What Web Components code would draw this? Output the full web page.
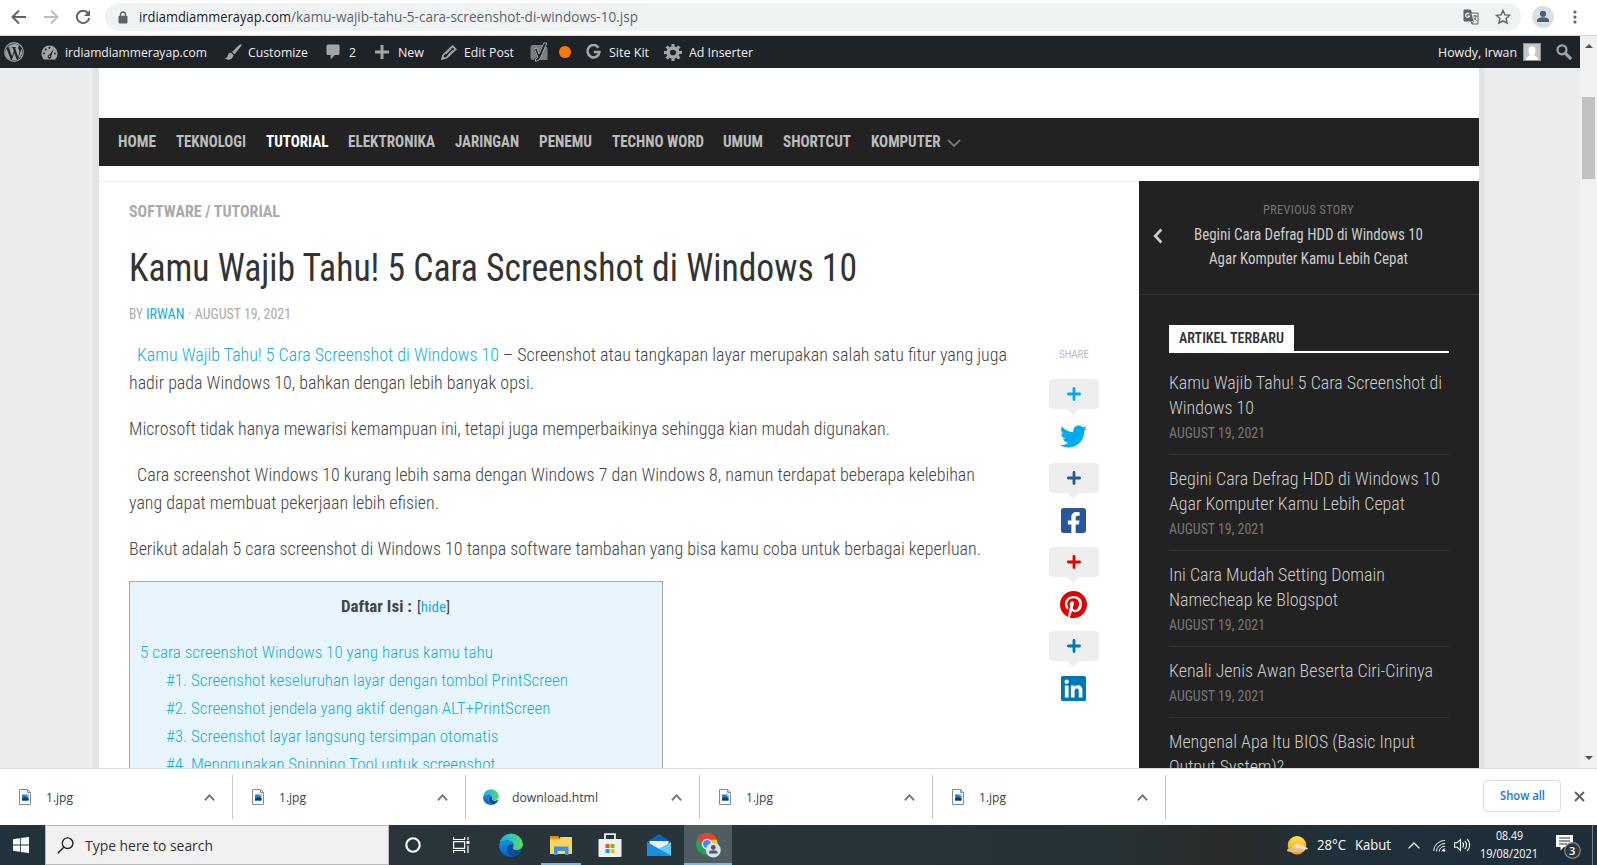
<!DOCTYPE html>
<html lang="id">
<head>
<meta charset="utf-8">
<title>Kamu Wajib Tahu! 5 Cara Screenshot di Windows 10</title>
<style>
  body {
    margin: 0;
    height: 865px;
    overflow: hidden;
    display: flex;
    flex-direction: column;
    --ui: "Open Sans", "Noto Sans", sans-serif;
    --site: "Roboto Condensed", Roboto, sans-serif;
    --link: #16aed6;
    --dark: #222;
  }
</style>
</head>
<body>
  <browser-bar></browser-bar>
  <page-view>
    <admin-bar slot="admin"></admin-bar>
    <site-nav></site-nav>
    <div style="display: flex; padding-top: 15px; background: #fff">
      <blog-post></blog-post>
      <side-bar></side-bar>
    </div>
  </page-view>
  <download-shelf>
    <download-item name="1.jpg" icon="file" w="27"></download-item>
    <download-item name="1.jpg" icon="file" w="27"></download-item>
    <download-item name="download.html" icon="edge" w="86"></download-item>
    <download-item name="1.jpg" icon="file" w="27"></download-item>
    <download-item name="1.jpg" icon="file" w="27"></download-item>
  </download-shelf>
  <task-bar></task-bar>

<script>
const ICONS = {
  back: ['0 0 16 16', '<path d="M15 8H2M8 1.5 1.5 8 8 14.5" fill="none" stroke="currentColor" stroke-width="2"/>'],
  forward: ['0 0 16 16', '<path d="M1 8h13M8 1.5 14.500 8 8 14.500" fill="none" stroke="currentColor" stroke-width="2"/>'],
  reload: ['0 0 16 16', '<path d="M13.300 4.500A6.200 6.200 0 1 0 14.200 9" fill="none" stroke="currentColor" stroke-width="2"/><path d="M15 1v6H9z" fill="currentColor"/>'],
  lock: ['0 0 10 13', '<path d="M2.500 6V3.500a2.500 2.500 0 0 1 5 0V6" fill="none" stroke="currentColor" stroke-width="1.400"/><rect x=".5" y="4.800" width="9" height="7.700" rx="1" fill="currentColor"/>'],
  translate: ['0 0 16 16', '<path d="M1 1h6.500l1 3H15v11H9l-1-3H1z" fill="none" stroke="currentColor"/><path d="M1 1h6.500l3 11H1z" fill="currentColor"/><path d="M6.200 5.200A2 2 0 1 0 6.500 7H4.700" fill="none" stroke="#fff" stroke-width="1.100"/><path d="M10 7h4M12 6v1M13.300 7c-.5 2-1.500 3-2.500 4M11 8.500l2.500 3M9 15l1.500-3" fill="none" stroke="currentColor"/>'],
  star: ['0 0 16 16', '<path d="m8 1.600 1.900 4.300 4.700.5-3.500 3.100 1 4.700L8 11.800l-4.100 2.400 1-4.700L1.400 6.400l4.700-.5z" fill="none" stroke="currentColor" stroke-width="1.400"/>'],
  person: ['0 0 22 22', '<circle cx="11" cy="11" r="11" fill="#dadfe5"/><circle cx="11" cy="7.800" r="3.100" fill="#4d5e73"/><path d="M5 16v-1.500c0-2.300 3-3.300 6-3.300s6 1 6 3.300V16z" fill="#4d5e73"/>'],
  dots: ['0 0 4 14', '<g fill="currentColor"><circle cx="2" cy="2" r="1.600"/><circle cx="2" cy="7" r="1.600"/><circle cx="2" cy="12" r="1.600"/></g>'],
  wordpress: ['0 0 20 20', '<circle cx="10" cy="10" r="9.300" fill="none" stroke="currentColor" stroke-width="1.200"/><path d="M2.500 6.500 7 18a8 8 0 0 1-4.500-11.500zM3.300 5.500A8 8 0 0 1 15.500 4c-1.500.4-1.600 1.800-.8 3 .9 1.500 1 2.500.4 4.500l-1 3.500-3.200-9.300 1.100-.2V5H7.500v.5l1.200.2 1.200 3.400-1.900 5.500L5 5.700l1-.2V5.200zM10.200 10.800l2.700 7a8 8 0 0 1-5 .2zM17.200 6.300A8 8 0 0 1 14 17l2.500-7c.5-1.500.8-2.500.7-3.700z" fill="currentColor"/>'],
  dashboard: ['0 0 18 16', '<path d="M9 .5A8.500 8.500 0 0 0 .5 9c0 2.500 1 4.800 2.500 6.500h12A9 9 0 0 0 17.500 9 8.500 8.500 0 0 0 9 .5z" fill="currentColor"/><g fill="#1d2327"><circle cx="3.200" cy="9" r="1.100"/><circle cx="5" cy="4.800" r="1.100"/><circle cx="9" cy="3" r="1.100"/><circle cx="14.800" cy="9" r="1.100"/><path d="M13.800 4 10.800 11.500a2 2 0 1 1-2-1z"/></g><circle cx="9" cy="12" r=".9" fill="currentColor"/>'],
  brush: ['0 0 18 16', '<path d="M17.500.4c-.6-.6-2 .2-3.700 1.800L8 8l2.500 2.300 5-6C17.200 2.300 18 1 17.500.4zM7.200 8.800c-1.800-.2-3 .8-3.300 2.500C3.500 13.200 2.300 14.200.5 14.800c3.500 1.600 8 1.200 9-3.600z" fill="currentColor"/>'],
  comment: ['0 0 15 16', '<path d="M2 .5h11q1.500 0 1.500 1.500v7.500q0 1.500-1.500 1.500H9.500L5 15.500V11H2Q.5 11 .5 9.500V2Q.5.5 2 .5z" fill="currentColor"/>'],
  plus: ['0 0 14 14', '<path d="M7 0v14M0 7h14" stroke="currentColor" stroke-width="3"/>'],
  pencil: ['0 0 16 16', '<path d="M11.500 1.300 14.700 4.500 5.500 13.700 1 15l1.300-4.500z" fill="none" stroke="currentColor" stroke-width="1.800"/><path d="M10.500 4 5 9.500M12 5.500 6.500 11" stroke="currentColor"/><path d="m.6 15.400 1-4 3 3z" fill="currentColor"/>'],
  yoast: ['0 0 18 20', '<path d="M3 3h9.500L8 13 5.500 7h-2L7 14q-.2 2.500-3 2.700V18H3Q.5 18 .5 15V6Q.5 3 3 3z" fill="currentColor" opacity=".7"/><path d="M14.500 3.500Q17.500 4 17.500 7v11H8c2-1 2.500-3 3.200-5z" fill="currentColor" opacity=".7"/><path d="M13.800 1h3L10.500 16q-1 3-5 3.300V17q2.500-.3 2-3L4.200 6.500H7L9 12z" fill="#1d2327" stroke="currentColor"/>'],
  google: ['0 0 16 16', '<path d="M13.300 3.700A6.300 6.300 0 1 0 14.300 8H8.300" fill="none" stroke="currentColor" stroke-width="2.600"/>'],
  gear: ['0 0 18 18', '<circle cx="9" cy="9" r="4.800" fill="none" stroke="currentColor" stroke-width="3.600"/><path d="M9 0v3M9 15v3M0 9h3M15 9h3M2.600 2.600l2.200 2.200M13.200 13.200l2.200 2.200M2.600 15.400l2.200-2.200M13.200 4.800l2.200-2.200" stroke="currentColor" stroke-width="3.200"/>'],
  avatar: ['0 0 18 18', '<rect x=".5" y=".5" width="17" height="17" fill="#c5c5c5" stroke="#8c8f94"/><path d="M3 17c0-3 2.500-3.500 3.800-4.500C5.500 10 5.500 8.500 5.500 7.500a3.500 4.200 0 0 1 7 0c0 1 0 2.500-1.300 5C12.500 13.500 15 14 15 17z" fill="#fff"/>'],
  find: ['0 0 16 16', '<circle cx="6" cy="5.800" r="4.500" fill="none" stroke="currentColor" stroke-width="2.200"/><path d="m9.200 9.200 5 5" stroke="currentColor" stroke-width="3.200" stroke-linecap="round"/>'],
  down: ['0 0 14 8', '<path d="m1 1 6 6 6-6" fill="none" stroke="currentColor" stroke-width="1.800"/>'],
  up: ['0 0 12 7', '<path d="m1 6.200 5-4.900 5 4.900" fill="none" stroke="currentColor" stroke-width="2"/>'],
  thinup: ['0 0 12 7', '<path d="m.6 6.400 5.400-5.400 5.400 5.400" fill="none" stroke="currentColor" stroke-width="1.300"/>'],
  left: ['0 0 11 16', '<path d="M9.200 1.500 2.500 8l6.700 6.500" fill="none" stroke="currentColor" stroke-width="3"/>'],
  twitter: ['0 0 512 512', '<path fill="currentColor" d="M459.400 151.700c.3 4.500.3 9.100.3 13.600 0 138.700-105.600 298.600-298.600 298.600-59.500 0-114.700-17.200-161.100-47.100 8.400 1 16.600 1.300 25.300 1.300 49.100 0 94.200-16.600 130.300-44.800-46.100-1-84.800-31.200-98.100-72.800 6.500 1 13 1.600 19.800 1.600 9.400 0 18.800-1.300 27.600-3.600-48.100-9.700-84.100-52-84.100-103v-1.300c14 7.800 30.200 12.700 47.400 13.300-28.300-18.800-46.800-51-46.800-87.400 0-19.500 5.200-37.400 14.300-53 51.700 63.700 129.300 105.300 216.400 109.800-1.600-7.800-2.600-15.900-2.600-24 0-57.800 46.800-104.900 104.900-104.900 30.200 0 57.500 12.700 76.700 33.100 23.700-4.500 46.500-13.300 66.600-25.300-7.800 24.400-24.400 44.800-46.100 57.800 21.100-2.300 41.600-8.100 60.400-16.200-14.300 20.800-32.200 39.300-52.600 54.300z"/>'],
  facebook: ['0 32 448 448', '<path fill="currentColor" d="M400 32H48A48 48 0 0 0 0 80v352a48 48 0 0 0 48 48h137.300V327.700h-63V256h63v-54.600c0-62.200 37-96.500 93.700-96.500 27.100 0 55.500 4.800 55.500 4.800v61h-31.300c-30.800 0-40.400 19.100-40.400 38.700V256h68.800l-11 71.700h-57.800V480H400a48 48 0 0 0 48-48V80a48 48 0 0 0-48-48z"/>'],
  pinterest: ['0 8 496 496', '<path fill="currentColor" d="M496 256c0 137-111 248-248 248-25.600 0-50.200-3.900-73.400-11.100 10.100-16.500 25.200-43.500 30.800-65 3-11.600 15.400-59 15.400-59 8.100 15.400 31.700 28.500 56.800 28.500 74.800 0 128.700-68.800 128.700-154.300 0-81.900-66.900-143.200-152.900-143.200-107 0-163.900 71.800-163.900 150.100 0 36.400 19.400 81.700 50.300 96.100 4.700 2.200 7.200 1.200 8.300-3.300.8-3.400 5-20.300 6.900-28.100.6-2.500.3-4.700-1.700-7.100-10.100-12.500-18.300-35.300-18.300-56.600 0-54.700 41.400-107.600 112-107.600 60.900 0 103.600 41.500 103.600 100.900 0 67.100-33.900 113.600-78 113.600-24.300 0-42.600-20.100-36.700-44.800 7-29.500 20.500-61.300 20.500-82.600 0-19-10.200-34.900-31.400-34.900-24.900 0-44.900 25.700-44.900 60.200 0 22 7.400 36.800 7.400 36.800s-24.500 103.800-29 123.200c-5 21.400-3 51.600-.9 71.200C65.400 450.900 0 361.100 0 256 0 119 111 8 248 8s248 111 248 248z"/>'],
  linkedin: ['0 32 448 448', '<path fill="currentColor" d="M416 32H31.900C14.300 32 0 46.500 0 64.300v383.400C0 465.500 14.300 480 31.900 480H416c17.600 0 32-14.500 32-32.300V64.300c0-17.800-14.400-32.300-32-32.300zM135.400 416H69V202.200h66.500V416zm-33.200-243c-21.300 0-38.500-17.300-38.500-38.500S80.900 96 102.200 96c21.200 0 38.500 17.300 38.500 38.500 0 21.300-17.200 38.500-38.500 38.500zm282.100 243h-66.400V312c0-24.800-.5-56.700-34.500-56.700-34.600 0-39.900 27-39.900 54.900V416h-66.400V202.200h63.700v29.200h.9c8.900-16.800 30.600-34.500 62.900-34.500 67.200 0 79.700 44.300 79.700 101.900V416z"/>'],
  cross: ['0 0 13 13', '<path d="M6.500 1.300v10.400M1.300 6.500h10.400" stroke="currentColor" stroke-width="2.600" stroke-linecap="round"/>'],
  close: ['0 0 11 11', '<path d="m1 1 9 9M10 1l-9 9" stroke="currentColor" stroke-width="2"/>'],
  file: ['0 0 12 16', '<path d="M.5.5h8l3 3v12H.5z" fill="#fff" stroke="#8a8a8a"/><path d="M8.500.5v3h3" fill="none" stroke="#8a8a8a"/><path d="M3 5.500h6.500v6H3z" fill="#1487d4"/><path d="m3 10 3-2 3.500 1.500v2H3z" fill="#043a6d"/><path d="M7 6h2v1.500z" fill="#8fe0ff"/>'],
  edge: ['0 0 24 24', '<defs><linearGradient id="a" x1="0" x2="1"><stop stop-color="#1aa5dc"/><stop offset=".5" stop-color="#2cc7c9"/><stop offset="1" stop-color="#5fdc4a"/></linearGradient><linearGradient id="b" x2="0" y2="1"><stop stop-color="#1793df"/><stop offset="1" stop-color="#0b5cb4"/></linearGradient></defs><path d="M.2 11A12 12 0 0 1 24 11c0 4-3 6-6.500 6-2.500 0-4-1-4-2 0-.8 1-1.200 1-3 0-2-2-4.500-6-4.500C4 7.500 1 9 .2 11z" fill="url(#a)"/><path d="M.1 12C1 8.500 5 7.400 8.500 7.500c3.500.1 6 2.300 6 4.500-3-2-6.500 1-6.300 4.500.2 3 3 6.500 7.300 6.900C7.500 25.500-.5 20 .1 12z" fill="url(#b)"/><path d="M8.200 16.500C8 13 11.500 10 14.500 12c0 1.700-1 2.200-1 3 0 1 1.500 2.500 4.500 2.500 2.400 0 4-.8 4.800-1.200.4 0 .5.200.3.600a12 12 0 0 1-7.300 6.600c-4.300-.4-7.400-4-7.600-7z" fill="#104a9c"/>'],
  windows: ['0 0 16 16', '<path d="M0 2.200 7 1.200v6.400H0zM7.800 1.100 16 0v7.600H7.800zM0 8.400h7v6.400l-7-1zM7.800 8.400H16V16l-8.200-1.100z" fill="#fff"/>'],
  search: ['0 0 17 17', '<circle cx="10.600" cy="6.200" r="5.300" fill="none" stroke="#222" stroke-width="1.400"/><path d="M6.800 10.200.8 16.200" stroke="#222" stroke-width="1.500"/>'],
  cortana: ['0 0 16 16', '<circle cx="8" cy="8" r="6.700" fill="none" stroke="#fff" stroke-width="2.100"/>'],
  taskview: ['0 0 17 16', '<path d="M.6 0v2.500h11V0M.6 16v-2.500h11V16M.6 4.700h11v6.600H.6zM15 0v3M15 8.500V16" fill="none" stroke="#fff" stroke-width="1.200"/><path d="M13.500 4h3v3h-3z" fill="#fff"/>'],
  explorer: ['0 0 22 20', '<path d="M0 1h8l1.500 3H22v15H0z" fill="#e8a51c"/><path d="M0 4.500h9L10.500 2H22v17H0z" fill="#fdd35d"/><path d="M0 1h8l1.500 2H0z" fill="#dc8e0c"/><path d="M4 11.500h14.500V20H15v-4H7.500v4H4z" fill="#3c91dc"/>'],
  store: ['0 0 24 24', '<path d="M7 6V1.200h10V6" fill="none" stroke="#e9eef0" stroke-width="1.800"/><path d="M.5 6h23v17q0 1-1 1h-21q-1 0-1-1z" fill="#f1f1f1"/><path d="M7.500 11h4v4h-4z" fill="#f25022"/><path d="M12.500 11h4v4h-4z" fill="#7fba00"/><path d="M7.500 16h4v4h-4z" fill="#00a4ef"/><path d="M12.500 16h4v4h-4z" fill="#ffb900"/>'],
  mail: ['0 0 24 22', '<path d="M0 8 12 0l12 8z" fill="#0b62b8"/><path d="M2.500 7h19v8h-19z" fill="#f2f2f2"/><path d="M0 8v13q0 1 1 1h22q1 0 1-1V8L12 15.500z" fill="#38b6f1"/><path d="m0 8 24 13.500Q24 22 23 22H1q-1 0-1-1z" fill="#1a8de0"/><path d="M24 8v13.500L11.800 14.800z" fill="#5ccdf8"/>'],
  chrome: ['0 0 25 25', '<circle cx="11" cy="11" r="11" fill="#26a559"/><path d="M1.500 5.500A11 11 0 0 1 20.600 5.700L22 8H11l-4.500 5z" fill="#e24334"/><path d="M20.600 6.700A11 11 0 0 1 11.500 22L16 13l-1-6.300z" fill="#fbc116"/><circle cx="11" cy="11" r="5.200" fill="#fff"/><circle cx="11" cy="11" r="4" fill="#4285f4"/><circle cx="17.300" cy="17" r="7.500" fill="#dadfe5"/><circle cx="17.300" cy="14.500" r="2.400" fill="#4a5a6d"/><path d="M13 20.500v-1c0-1.500 2-2.300 4.300-2.300s4.300.8 4.300 2.300v1z" fill="#4a5a6d"/>'],
  weather: ['0 0 21 19', '<defs><linearGradient id="w" x2="0" y2="1"><stop stop-color="#ffe14a"/><stop offset="1" stop-color="#f79a10"/></linearGradient></defs><circle cx="10" cy="9.300" r="9.200" fill="url(#w)"/><path d="M6 11c.5-2.500 4-4.500 6.500-2 2-.8 4 .5 4.500 2 2 0 4 .7 4 1.500s-2 1.200-4 1.200H7z" fill="#f0dfc0"/><path d="M0 14.500c0-1.500 2-2 3.500-2 1-2 4.500-2 5.500 0 3-.5 6 .5 9 1.500-1 1.500-5 2-9 2s-9 .2-9-1.500z" fill="#d8c09c"/>'],
  wifi: ['0 0 14 14', '<g fill="none" stroke="#fff" stroke-width="1"><path d="M.6 13A12.400 12.400 0 0 1 13 1.500M3.700 13.500A9.500 9.500 0 0 1 13 4.700M6.700 13.500A6.500 6.500 0 0 1 13 7.800M9.500 13.500a4 4 0 0 1 3.500-3"/></g><circle cx="12" cy="12.500" r="1.300" fill="#fff"/>'],
  sound: ['0 0 17 14', '<g fill="none" stroke="#fff" stroke-width="1.100"><path d="M.6 4.700h2.600L6.500 1.500v11L3.200 9.300H.6zM8.500 4.500a3.500 3.500 0 0 1 0 5M10.800 2.800a6 6 0 0 1 0 8.400M13.200 1a8.500 8.500 0 0 1 0 12"/></g>'],
  notes: ['0 0 25 25', '<path d="M0 1h17v12H8l-3.500 3.500V13H0z" fill="#fff"/><path d="M3 4h11M3 7h11M3 10h8" stroke="#22303a" stroke-width="1.200"/><circle cx="16.500" cy="16.500" r="7.800" fill="#2e3438" stroke="#858b8f" stroke-width="1.200"/>']
};

// Shared base: subclasses return their markup from render()
class BaseElement extends HTMLElement {
  constructor() {
    super();
    this.attachShadow({ mode: 'open' });
  }

  connectedCallback() {
    const tpl = document.createElement('template');
    tpl.innerHTML = this.render();
    this.shadowRoot.replaceChildren(tpl.content.cloneNode(true));
  }
}

class UiIcon extends BaseElement {
  render() {
    const [box, body] = ICONS[this.getAttribute('name')];
    const w = this.getAttribute('w');
    const h = this.getAttribute('h') || w;
    return `
      <style>
        :host { display: inline-flex; flex: none; }
        svg { display: block; }
      </style>
      <svg width="${w}" height="${h}" viewBox="${box}" preserveAspectRatio="none">${body}</svg>`;
  }
}

// One line of text, condensed or widened to the width in "w"
class FitText extends BaseElement {
  render() {
    return `
      <style>
        :host { display: inline-flex; flex: none; width: ${this.getAttribute('w')}px; }
        span { flex: none; white-space: pre; transform-origin: 0 50%; }
      </style>
      <span><slot></slot></span>`;
  }

  connectedCallback() {
    super.connectedCallback();
    const span = this.shadowRoot.querySelector('span');
    const natural = span.getBoundingClientRect().width;
    if (natural) span.style.transform = `scaleX(${this.getAttribute('w') / natural})`;
  }
}

class BrowserBar extends BaseElement {
  render() {
    return `
      <style>
        :host {
          display: flex; align-items: center; flex: none; height: 36px; box-sizing: border-box;
          padding: 0 20px 1px 11px; background: #fff; border-bottom: 1px solid #d5d8db;
          color: #5f6368; font: 14px/20px var(--ui);
        }
        .omni {
          flex: 1; display: flex; align-items: center; height: 28px; box-sizing: border-box;
          margin: 0 11px 0 14px; padding: 0 10px 0 13px; border-radius: 14px; background: #eff3f4;
        }
        .host { margin-left: 11px; color: #202124; }
        .grow { flex: 1; }
      </style>
      <ui-icon name="back" w="16"></ui-icon>
      <ui-icon name="forward" w="16" style="margin: 0 16px; color: #babcbe"></ui-icon>
      <ui-icon name="reload" w="16"></ui-icon>
      <div class="omni">
        <ui-icon name="lock" w="10" h="13"></ui-icon>
        <fit-text class="host" w="152">irdiamdiammerayap.com</fit-text>
        <fit-text w="347">/kamu-wajib-tahu-5-cara-screenshot-di-windows-10.jsp</fit-text>
        <span class="grow"></span>
        <ui-icon name="translate" w="16" style="margin-right: 16px"></ui-icon>
        <ui-icon name="star" w="16"></ui-icon>
      </div>
      <ui-icon name="person" w="22" style="margin-right: 19px"></ui-icon>
      <ui-icon name="dots" w="4" h="14"></ui-icon>`;
  }
}

class PageView extends BaseElement {
  render() {
    return `
      <style>
        :host { display: flex; flex: none; height: 732px; overflow: hidden; }
        .view { width: 1580px; height: 732px; overflow: hidden; background: #ececec; }
        .site { width: 1380px; height: 700px; margin-left: 93px; border: solid #e3e3e3; border-width: 0 6px; background: #fff; overflow: hidden; }
        .scroll { width: 17px; box-sizing: border-box; padding: 8px 2px; background: #f1f1f1; display: flex; flex-direction: column; align-items: center; }
        .scroll i { border: 4px solid transparent; }
        .up { border-bottom-color: #505050 !important; border-top: 0 !important; }
        .dn { border-top-color: #505050 !important; border-bottom: 0 !important; margin-top: auto; }
        b { width: 13px; height: 82px; margin-top: 49px; background: #c1c1c1; }
      </style>
      <div class="view">
        <slot name="admin"></slot>
        <div class="site"><slot></slot></div>
      </div>
      <div class="scroll"><i class="up"></i><b></b><i class="dn"></i></div>`;
  }
}

class AdminBar extends BaseElement {
  render() {
    // gap before icon, icon, width, height, gap, text, text width
    const items = [
      [17, 'dashboard', 17, 15, 7, 'irdiamdiammerayap.com', 142],
      [17, 'brush', 18, 16, 6, 'Customize', 60],
      [18, 'comment', 14, 16, 9, '2', 7],
      [19, 'plus', 14, 14, 9, 'New', 26],
      [17, 'pencil', 16, 15, 7, 'Edit Post', 50]
    ];
    const row = ([gap, icon, w, h, pad, text, tw]) =>
      `<ui-icon name="${icon}" w="${w}" h="${h}" style="margin: 0 ${pad}px 0 ${gap}px"></ui-icon><fit-text w="${tw}">${text}</fit-text>`;
    return `
      <style>
        :host {
          display: flex; align-items: center; height: 32px; box-sizing: border-box; padding: 0 8px 0 4px;
          background: #1d2327; color: #f0f0f1; font: 13px/32px var(--ui);
        }
        ui-icon { color: #a0a5aa; }
        .dot { width: 12px; height: 12px; border-radius: 50%; background: #ff7a00; margin-left: 11px; }
        .grow { flex: 1; }
      </style>
      <ui-icon name="wordpress" w="20"></ui-icon>
      ${items.map(row).join('')}
      <ui-icon name="yoast" w="18" h="20" style="margin-left: 16px"></ui-icon>
      <span class="dot"></span>
      ${row([15, 'google', 15, 16, 8, 'Site Kit', 40])}
      ${row([15, 'gear', 18, 17, 7, 'Ad Inserter', 64])}
      <span class="grow"></span>
      <fit-text w="79">Howdy, Irwan</fit-text>
      <ui-icon name="avatar" w="18" style="margin: 0 15px 0 6px"></ui-icon>
      <ui-icon name="find" w="16"></ui-icon>`;
  }
}

class SiteNav extends BaseElement {
  render() {
    const links = [
      ['HOME', 38], ['TEKNOLOGI', 70], ['TUTORIAL', 62.5], ['ELEKTRONIKA', 87], ['JARINGAN', 64],
      ['PENEMU', 53], ['TECHNO WORD', 92], ['UMUM', 40], ['SHORTCUT', 68], ['KOMPUTER', 69.5]
    ];
    return `
      <style>
        :host {
          display: flex; align-items: center; gap: 19.850px; height: 48px; margin-top: 50px; padding-left: 19px;
          background: var(--dark); color: #bcbcbc; font: 700 16px/48px var(--site);
        }
        .on { color: #fff; }
        ui-icon { margin: 2px 0 0 -13px; color: #777; }
      </style>
      ${links.map(([t, w]) => `<fit-text w="${w}" class="${t === 'TUTORIAL' ? 'on' : ''}">${t}</fit-text>`).join('')}
      <ui-icon name="down" w="14" h="8"></ui-icon>`;
  }
}

class ShareItem extends BaseElement {
  render() {
    const h = this.getAttribute('h');
    const w = this.getAttribute('w');
    return `
      <style>
        :host { display: flex; flex-direction: column; align-items: center; width: 50px; height: 84px; color: ${this.getAttribute('color')}; }
        .count { width: 50px; height: 30px; border-radius: 4px; background: #eee; display: flex; align-items: center; justify-content: center; }
        .tip { border: 6px solid transparent; border-top-color: #eee; border-bottom: 0; margin-right: 2px; }
        .count ui-icon { margin: 0 1px 1px 0; }
        .logo { height: 42px; display: flex; align-items: center; padding-right: 1px; }
      </style>
      <div class="count"><ui-icon name="cross" w="14"></ui-icon></div>
      <div class="tip"></div>
      <div class="logo"><ui-icon name="${this.getAttribute('icon')}" w="${w}" h="${h}"></ui-icon></div>`;
  }
}

class BlogPost extends BaseElement {
  render() {
    const toc = [
      ['#1. Screenshot keseluruhan layar dengan tombol PrintScreen', 402],
      ['#2. Screenshot jendela yang aktif dengan ALT+PrintScreen', 384.5],
      ['#3. Screenshot layar langsung tersimpan otomatis', 332.5],
      ['#4. Menggunakan Snipping Tool untuk screenshot', 329.5]
    ];
    return `
      <style>
        :host {
          display: block; width: 1040px; height: 690px; box-sizing: border-box; padding: 18px 0 0 30px;
          border-top: 1px solid #eee; background: #fff; color: #444; font: 300 18px/28px var(--site);
        }
        .cat { font: 700 17px/22px var(--site); color: #aaa; height: 22px; }
        h1 { margin: 22px 0 0; font: 400 38px/48px var(--site); color: #333; height: 48px; }
        .meta { display: flex; margin-top: 12px; font: 400 14px/20px var(--site); color: #aaa; }
        .link { color: var(--link); }
        .cols { display: flex; margin-top: 17px; }
        .text { width: 920px; }
        p { margin: 0 0 18px; }
        p > span { display: flex; height: 28px; }
        .in { padding-left: 8px; }
        .toc { width: 534px; height: 250px; box-sizing: border-box; border: 1px solid #aaa; background: #e8f5ff; padding: 10px; font-size: 17px; }
        .toc div { height: 28px; }
        .toc .head { display: flex; justify-content: center; align-items: baseline; margin-bottom: 18px; }
        .head strong { margin-right: 5px; color: #444; font-weight: 700; }
        .sub { padding-left: 26px; }
        .hide { font-size: 15px; font-weight: 400; margin-right: 2px; }
        .share { display: flex; flex-direction: column; align-items: center; }
        .label { font: 300 11px/14px var(--site); color: #999; margin: 7px 0 17px; }
      </style>
      <div class="cat"><fit-text w="151">SOFTWARE / TUTORIAL</fit-text></div>
      <h1><fit-text w="728">Kamu Wajib Tahu! 5 Cara Screenshot di Windows 10</fit-text></h1>
      <div class="meta">
        <fit-text w="17">BY </fit-text><fit-text w="38.500" class="link">IRWAN</fit-text><fit-text w="106"> · AUGUST 19, 2021</fit-text>
      </div>
      <div class="cols">
        <div class="text">
          <p>
            <span class="in"><fit-text class="link" w="362">Kamu Wajib Tahu! 5 Cara Screenshot di Windows 10</fit-text><fit-text w="508"> – Screenshot atau tangkapan layar merupakan salah satu fitur yang juga</fit-text></span>
            <span><fit-text w="405">hadir pada Windows 10, bahkan dengan lebih banyak opsi.</fit-text></span>
          </p>
          <p><span><fit-text w="761">Microsoft tidak hanya mewarisi kemampuan ini, tetapi juga memperbaikinya sehingga kian mudah digunakan.</fit-text></span></p>
          <p>
            <span class="in"><fit-text w="838">Cara screenshot Windows 10 kurang lebih sama dengan Windows 7 dan Windows 8, namun terdapat beberapa kelebihan</fit-text></span>
            <span><fit-text w="310">yang dapat membuat pekerjaan lebih efisien.</fit-text></span>
          </p>
          <p><span><fit-text w="852">Berikut adalah 5 cara screenshot di Windows 10 tanpa software tambahan yang bisa kamu coba untuk berbagai keperluan.</fit-text></span></p>
          <div class="toc">
            <div class="head"><strong><fit-text w="71">Daftar Isi :</fit-text></strong><fit-text class="hide" w="33">[<span class="link">hide</span>]</fit-text></div>
            <div class="link"><fit-text w="353">5 cara screenshot Windows 10 yang harus kamu tahu</fit-text></div>
            ${toc.map(([t, w]) => `<div class="link sub"><fit-text w="${w}">${t}</fit-text></div>`).join('')}
          </div>
        </div>
        <div class="share">
          <fit-text class="label" w="30">SHARE</fit-text>
          <share-item icon="twitter" color="#00abf0" w="27" h="27"></share-item>
          <share-item icon="facebook" color="#2a5697" w="25" h="25"></share-item>
          <share-item icon="pinterest" color="#e10000" w="27" h="27"></share-item>
          <share-item icon="linkedin" color="#0077b5" w="25" h="25"></share-item>
        </div>
      </div>`;
  }
}

class SideBar extends BaseElement {
  render() {
    const posts = [
      [['Kamu Wajib Tahu! 5 Cara Screenshot di', 273], ['Windows 10', 85]],
      [['Begini Cara Defrag HDD di Windows 10', 271], ['Agar Komputer Kamu Lebih Cepat', 236]],
      [['Ini Cara Mudah Setting Domain', 216], ['Namecheap ke Blogspot', 169]],
      [['Kenali Jenis Awan Beserta Ciri-Cirinya', 264]],
      [['Mengenal Apa Itu BIOS (Basic Input', 246], ['Output System)?', 115]]
    ];
    const item = lines => `
      <li>
        ${lines.map(([t, w]) => `<div><fit-text w="${w}">${t}</fit-text></div>`).join('')}
        <time><fit-text w="96">AUGUST 19, 2021</fit-text></time>
      </li>`;
    return `
      <style>
        :host { display: block; width: 340px; height: 690px; background: var(--dark); color: #ccc; font: 300 18px/25px var(--site); }
        .prev { display: flex; align-items: center; height: 114px; box-sizing: border-box; padding: 0 0 6px 14px; border-bottom: 1px solid #333; }
        .prev ui-icon { margin-top: 2px; }
        .prev div { width: 290px; display: flex; flex-direction: column; align-items: center; font: 400 16px/24px var(--site); }
        .prev small { font-size: 13px; line-height: 21px; height: 24px; color: #777; letter-spacing: .5px; }
        h3 { margin: 30px 30px 17px; height: 28px; box-sizing: border-box; border-bottom: 2px solid #fff; display: flex; font: 600 15px/27px var(--site); color: #333; }
        h3 span { display: flex; height: 28px; padding: 0 10px; background: #fff; }
        ul { margin: 0 30px; padding: 0; list-style: none; }
        li { border-bottom: 1px solid #333; padding: 11px 0 11px; }
        li:first-child { padding-top: 0; }
        li div { height: 25px; }
        time { display: block; height: 20px; margin-top: 3px; font: 400 14px/20px var(--site); color: #777; }
      </style>
      <div class="prev">
        <ui-icon name="left" w="10" h="16"></ui-icon>
        <div>
          <small><fit-text w="91">PREVIOUS STORY</fit-text></small>
          <fit-text w="229">Begini Cara Defrag HDD di Windows 10</fit-text>
          <fit-text w="199">Agar Komputer Kamu Lebih Cepat</fit-text>
        </div>
      </div>
      <h3><span><fit-text w="105">ARTIKEL TERBARU</fit-text></span></h3>
      <ul>${posts.map(item).join('')}</ul>`;
  }
}

class DownloadItem extends BaseElement {
  render() {
    const icon = this.getAttribute('icon');
    const size = icon === 'file' ? 'w="12" h="16" style="margin: 0 2px"' : 'w="16"';
    return `
      <style>
        :host { display: flex; align-items: center; width: 233.200px; height: 44px; box-sizing: border-box; padding: 0 17px; border-right: 1px solid #c4c6c9; }
        fit-text { margin-left: 13px; }
        .arrow { margin-left: auto; color: #75787c; }
      </style>
      <ui-icon name="${icon}" ${size}></ui-icon>
      <fit-text w="${this.getAttribute('w')}">${this.getAttribute('name')}</fit-text>
      <ui-icon class="arrow" name="up" w="11" h="7"></ui-icon>`;
  }
}

class DownloadShelf extends BaseElement {
  render() {
    return `
      <style>
        :host {
          display: flex; align-items: center; flex: none; height: 57px; box-sizing: border-box; padding-right: 12px;
          border-top: 1px solid #d7dade; background: #fff; color: #3c4043; font: 13px/20px var(--ui);
        }
        button {
          width: 78px; height: 32px; margin: 0 13px 2px auto; padding: 0; border: 1px solid #dadce0; border-radius: 4px;
          background: #fff; color: #1a73e8; font: 600 12px/28px var(--ui);
        }
      </style>
      <slot></slot>
      <button><fit-text w="45">Show all</fit-text></button>
      <ui-icon name="close" w="11" style="color: #5f6368; margin-bottom: 2px"></ui-icon>`;
  }
}

class TaskBar extends BaseElement {
  render() {
    return `
      <style>
        :host {
          display: flex; align-items: center; flex: none; height: 40px; color: #fff; font: 14px/20px var(--ui);
          background: linear-gradient(90deg, #22333d, #29353b 20%, #27343a 45%, #263238 68%, #292b2a 77%, #20303a 83%, #1e2f39);
        }
        .start { display: flex; width: 45px; padding-left: 13px; box-sizing: border-box; }
        .search {
          display: flex; align-items: center; width: 344px; height: 40px; box-sizing: border-box; padding-left: 11px;
          border: 1px solid #b9b9b9; background: #f1f1f1; color: #333; font-size: 15px;
        }
        .search fit-text { margin-left: 11px; }
        .app { width: 48px; height: 40px; display: flex; flex: none; align-items: center; justify-content: center; box-sizing: border-box; }
        .open { width: 40px; margin: 0 5px 0 4px; }
        .open, .active { border-bottom: 2px solid #76b9ed; padding-top: 2px; }
        .active { background: #515c61; }
        .tray { flex: 1; display: flex; align-items: center; justify-content: flex-end; }
        .clock { display: flex; flex-direction: column; align-items: center; width: 58px; margin: 0 18px 0 9px; font-size: 12px; line-height: 18px; }
        .note { position: relative; display: flex; margin-top: 2px; }
        .note b { position: absolute; left: 13px; top: 9px; font: 600 11px/15px var(--ui); }
        .edge { width: 4px; height: 40px; margin-left: 11px; border-left: 1px solid #75818a; }
      </style>
      <div class="start"><ui-icon name="windows" w="16"></ui-icon></div>
      <div class="search"><ui-icon name="search" w="17"></ui-icon><fit-text w="128">Type here to search</fit-text></div>
      <div class="app"><ui-icon name="cortana" w="16"></ui-icon></div>
      <div class="app"><ui-icon name="taskview" w="17" h="16"></ui-icon></div>
      <div class="app" style="width: 52px"><ui-icon name="edge" w="24"></ui-icon></div>
      <div class="app open"><ui-icon name="explorer" w="22" h="20"></ui-icon></div>
      <div class="app"><ui-icon name="store" w="24"></ui-icon></div>
      <div class="app" style="width: 50px"><ui-icon name="mail" w="24" h="22"></ui-icon></div>
      <div class="app active"><ui-icon name="chrome" w="25"></ui-icon></div>
      <div class="tray">
        <ui-icon name="weather" w="21" h="19"></ui-icon>
        <fit-text w="29" style="margin: 0 9px">28°C</fit-text>
        <fit-text w="36">Kabut</fit-text>
        <ui-icon name="thinup" w="12" h="7" style="margin: 0 13px 0 17px"></ui-icon>
        <ui-icon name="wifi" w="13"></ui-icon>
        <ui-icon name="sound" w="17" h="14" style="margin-left: 8px"></ui-icon>
        <div class="clock"><fit-text w="27">08.49</fit-text><fit-text w="58">19/08/2021</fit-text></div>
        <div class="note"><ui-icon name="notes" w="25"></ui-icon><b>3</b></div>
        <div class="edge"></div>
      </div>`;
  }
}

customElements.define('browser-bar', BrowserBar);
customElements.define('page-view', PageView);
customElements.define('admin-bar', AdminBar);
customElements.define('site-nav', SiteNav);
customElements.define('share-item', ShareItem);
customElements.define('blog-post', BlogPost);
customElements.define('side-bar', SideBar);
customElements.define('download-item', DownloadItem);
customElements.define('download-shelf', DownloadShelf);
customElements.define('task-bar', TaskBar);
customElements.define('ui-icon', UiIcon);
// last, because it measures text in the fonts the others set
customElements.define('fit-text', FitText);
</script>
</body>
</html>
